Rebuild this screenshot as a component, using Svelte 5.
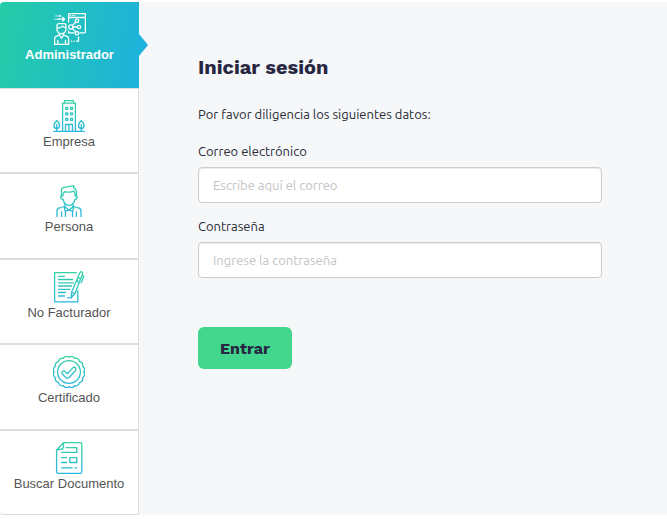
<script lang="ts">
	let active = $state('admin');
	let email = $state('');
	let password = $state('');

	const tabs = [
		{ id: 'admin', label: 'Administrador' },
		{ id: 'empresa', label: 'Empresa' },
		{ id: 'persona', label: 'Persona' },
		{ id: 'nofacturador', label: 'No Facturador' },
		{ id: 'certificado', label: 'Certificado' },
		{ id: 'buscar', label: 'Buscar Documento' }
	];

	// scalloped edge of the certificate seal
	function seal(n: number, r: number) {
		let d = '';
		for (let i = 0; i <= n; i++) {
			const a = (i / n) * Math.PI * 2;
			const x = (16 + r * Math.cos(a)).toFixed(2);
			const y = (16 + r * Math.sin(a)).toFixed(2);
			d += i === 0 ? `M${x} ${y}` : `A3.8 3.8 0 0 1 ${x} ${y}`;
		}
		return d + 'Z';
	}

	function submit(e: Event) {
		e.preventDefault();
	}
</script>

<main class="login">
	<nav class="menu">
		{#each tabs as tab}
			<button type="button" class="item" class:active={active === tab.id} onclick={() => (active = tab.id)}>
				<svg class="icon" viewBox="0 0 32 32" aria-hidden="true">
					<defs>
						<linearGradient id="grad-{tab.id}" gradientUnits="userSpaceOnUse" x1="0" y1="0" x2="0" y2="32">
							<stop offset="0" stop-color={active === tab.id ? '#fff' : '#34d3a2'} />
							<stop offset="1" stop-color={active === tab.id ? '#fff' : '#2bb6e0'} />
						</linearGradient>
					</defs>
					<g fill="none" stroke="url(#grad-{tab.id})" stroke-width="1.3" stroke-linecap="round" stroke-linejoin="round">
						{#if tab.id === 'admin'}
							<path d="M14.6 9V1.6q0-1 1-1h14.8q1 0 1 1v17.2q0 1-1 1H26M14.6 4.5h16.8M14.6 18v1.8h5.6" />
							<path d="M16.6 2.6h.2M18.6 2.6h.2M20.6 2.6h.2" />
							<circle cx="23" cy="7.8" r="1.7" />
							<circle cx="16.8" cy="14" r="2.1" />
							<circle cx="25" cy="14" r="1.7" />
							<circle cx="23" cy="20.2" r="1.7" />
							<path d="M18.4 12.5l3.3-3.4M19 14h4.2M18.4 15.5l3.3 3.4" />
							<path d="M.6 6.2h.2M3 6.2h7M8.6 4.4l2 1.8-2 1.8M2 3h.2M4.6 3h2" />
							<path d="M3 15v-2.5q0-2 2.5-1.8h4.8q1.6 0 1.6 1.6V17q-.8 3.6-4.4 3.8Q3.6 20.5 3 17zM3 15q4.5 0 5.5-2 1 1.6 3.4 1.6" />
							<path d="M.6 31.4V26q0-2.6 2.6-3.2l2.2-.8v-1.6M9.6 20.4V22l2.3.8q2.7.6 2.7 3.2v5.4H.6M5.4 22l2.1 3.2L9.6 22M3.8 27.5v3.8M11.5 27.5v3.8" />
							<path d="M17.5 28.2h.2M20 28.2h.2M22.5 28.2h2V24" />
						{:else if tab.id === 'empresa'}
							<path d="M11.5.7h9v2.5h-9zM9.6 31.3V3.2h12.8v28.1M.7 31.3h30.6" />
							<path d="M12.7 7.3h2v2h-2zM17.5 7.3h2v2h-2zM12.7 12.8h2v2h-2zM17.5 12.8h2v2h-2zM12.7 18.3h2v2h-2zM17.5 18.3h2v2h-2z" />
							<path d="M12.5 31v-6.5h7V31M16 24.5V31" />
							<path d="M3.7 20.5q2.8 2.5 2.8 5.2a2.8 2.8 0 0 1-5.6 0q0-2.7 2.8-5.2zM3.7 24.5V31" />
							<path d="M28.3 20.5q2.8 2.5 2.8 5.2a2.8 2.8 0 0 1-5.6 0q0-2.7 2.8-5.2zM28.3 24.5V31" />
						{:else if tab.id === 'persona'}
							<path d="M8.5 11V5.8q0-3.6 4-3.6L21 .7l-.4 2.1q2.8 1 2.8 4V11" />
							<path d="M9.8 10.8q.2-3.2 2.2-4.2 5 1.4 8.6-.6 1.6 1.6 1.6 4.8" />
							<path d="M9.8 10.8q-2-.4-2 1.4t2.2 2q.6 4 3.6 5.6 2.4 1.2 4.8 0 3-1.6 3.6-5.6 2.2-.2 2.2-2t-2-1.4" />
							<path d="M12 19.5v2.3l4 3.4 4-3.4v-2.3M11.2 21.5l1 4.6 3.8-.9 3.8.9 1-4.6" />
							<path d="M4 31.4V26q0-2.4 2.2-3l5-1.5M28 31.4V26q0-2.4-2.2-3l-5-1.5M8.6 27v4.4M23.4 27v4.4M12.5 26.2v5.2M19.5 26.2v5.2" />
						{:else if tab.id === 'nofacturador'}
							<path d="M23.5 1.6H1.6v29.2h23.2V20M24.8 11V9" />
							<path d="M5.5 5.3h6M5.5 8.5h14M5.5 11.8h15M5.5 15h13M5.5 18.3h11.5M5.5 21.5h7M5.5 25h6" />
							<path d="M27.2 1q2-.8 2.6 1.2L22 22.5l-3.6 4 .2-5.2zM25 6.6l2.6 1M29 4.5l1.8.8-2.6 6.5M18.6 21.3l3.2 1.2M14.5 26.8h4" />
						{:else if tab.id === 'certificado'}
							<path d={seal(16, 14.8)} />
							<circle cx="16" cy="16" r="11.4" />
							<path d="M9.3 15.7q1.3-1.6 2.9-.3l2.2 2.4 5.3-5.9q1.5-1.3 2.7-.1 1.2 1.3.1 2.7l-6.7 7.2q-1.4 1.2-2.8 0l-3.7-3.7q-1.1-1.1 0-2.3z" />
						{:else}
							<path d="M10.5.7h16.7q1.6 0 1.6 1.6v27.4q0 1.6-1.6 1.6H5.2q-1.6 0-1.6-1.6V8zM10.5.7q.4 3.5-.6 6.1L3.6 8" />
							<path d="M13 5.6h10.8v4.8H8.6M8.6 15.6h5M8.6 20.5h5M16.8 15.6h7v4.9h-7zM8.6 25.8h10.6M22 25.8h1.8" />
						{/if}
					</g>
				</svg>
				<span>{tab.label}</span>
			</button>
		{/each}
	</nav>

	<section class="content">
		<h1>Iniciar sesión</h1>
		<p>Por favor diligencia los siguientes datos:</p>
		<form onsubmit={submit}>
			<label for="email">Correo electrónico</label>
			<input id="email" type="email" placeholder="Escribe aquí el correo" bind:value={email} />
			<label for="password">Contraseña</label>
			<input id="password" type="password" placeholder="Ingrese la contraseña" bind:value={password} />
			<button type="submit" class="enter">Entrar</button>
		</form>
	</section>
</main>

<style>
	:global(body) {
		margin: 0;
		background: #fff;
	}
	.login {
		box-sizing: border-box;
		display: flex;
		min-height: calc(100vh - 6px);
		margin: 2px 0 4px;
		background: #f5f7f9;
		font-family: Ubuntu, 'Noto Sans', sans-serif;
		font-size: 13px;
		color: #2a2c38;
	}
	.menu {
		display: flex;
		flex-direction: column;
		flex: 0 0 139px;
	}
	.item {
		box-sizing: border-box;
		position: relative;
		display: flex;
		flex: 1;
		flex-direction: column;
		align-items: center;
		width: 100%;
		padding: 11px 0 20px;
		border: 0 solid #ddd;
		border-width: 0 1px 2px 0;
		background: #fff;
		color: #555;
		font-family: 'Liberation Sans', Arial, sans-serif;
		font-size: 13px;
		line-height: 20px;
		cursor: pointer;
	}
	.item:first-child {
		border-top-left-radius: 4px;
	}
	.item:last-child {
		border-bottom-width: 1px;
		border-bottom-left-radius: 4px;
	}
	.item.active {
		padding-bottom: 22px;
		border-right-width: 0;
		border-bottom-width: 1px;
		background: linear-gradient(100deg, #24cca6, #1eb2dd);
		color: #fff;
		font-weight: bold;
	}
	.item.active::after {
		content: '';
		position: absolute;
		left: 100%;
		top: 50%;
		margin-top: -11px;
		border-left: 9px solid #1eb2dd;
		border-top: 11px solid transparent;
		border-bottom: 11px solid transparent;
	}
	.icon {
		display: block;
		width: 32px;
		height: 32px;
	}
	.content {
		flex: 1;
		min-width: 0;
		padding: 51px 65px 40px 59px;
	}
	h1 {
		margin: 0 0 23px;
		color: #272742;
		font-family: 'Work Sans', Inter, sans-serif;
		font-size: 20px;
		font-weight: 700;
		line-height: 28px;
	}
	p {
		margin: 0 0 17px;
		line-height: 20px;
	}
	form {
		display: flex;
		flex-direction: column;
	}
	label {
		margin-bottom: 6px;
		line-height: 20px;
	}
	input {
		box-sizing: border-box;
		width: 100%;
		height: 36px;
		margin: 0 0 13px;
		padding: 6px 14px;
		border: 1px solid #ccc;
		border-radius: 4px;
		background: #fff;
		box-shadow: inset 0 1px 1px rgba(0, 0, 0, 0.075);
		color: #272742;
		font-family: inherit;
		font-size: 13px;
	}
	input::placeholder {
		color: #c4c4c4;
	}
	.enter {
		align-self: flex-start;
		height: 42px;
		margin-top: 36px;
		padding: 0 22px;
		border: 0;
		border-radius: 6px;
		background: #43d78d;
		color: #272742;
		font-family: 'Work Sans', Inter, sans-serif;
		font-size: 16px;
		font-weight: 700;
		cursor: pointer;
	}
</style>
